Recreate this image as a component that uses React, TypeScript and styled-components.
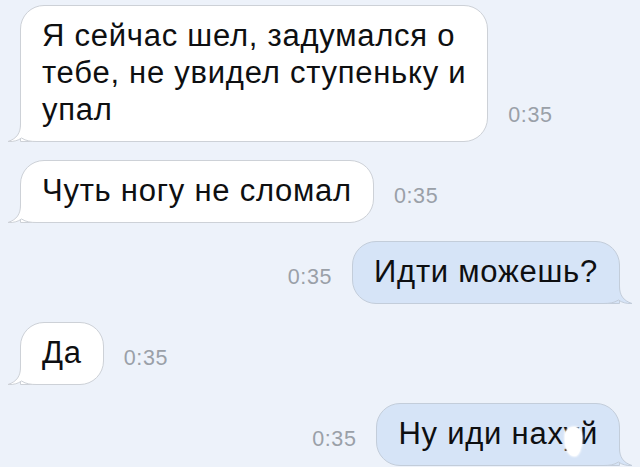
import React from "react";
import styled, { createGlobalStyle } from "styled-components";

const Global = createGlobalStyle`
  html, body { margin: 0; padding: 0; }
  body {
    background: #edf2fa;
    width: 640px;
    height: 467px;
    overflow: hidden;
    font-family: "Liberation Sans", Arial, sans-serif;
  }
`;

const Chat = styled.div`
  display: flex;
  flex-direction: column;
  gap: 18px;
  padding: 5px 20px 0 20px;
`;

const Row = styled.div<{ $out?: boolean }>`
  display: flex;
  align-items: flex-end;
  gap: 20px;
  justify-content: ${(p) => (p.$out ? "flex-end" : "flex-start")};
`;

const Bubble = styled.div<{ $out?: boolean }>`
  position: relative;
  padding: 11px 21px 13px;
  border: 1px solid ${(p) => (p.$out ? "#c3cdda" : "#cdd1d7")};
  background: ${(p) => (p.$out ? "#d6e4f7" : "#ffffff")};
  border-radius: 24px;
  ${(p) =>
    p.$out ? "border-bottom-right-radius: 0;" : "border-bottom-left-radius: 0;"}
  color: #0e0f11;
  font-size: 31px;
  line-height: 37px;
  letter-spacing: 0.75px;
  white-space: nowrap;
`;

const Text = styled.span`
  position: relative;
  z-index: 1;
`;

const TailSvg = styled.svg<{ $out?: boolean }>`
  position: absolute;
  bottom: -1px;
  width: 40px;
  height: 30px;
  z-index: 0;
  ${(p) => (p.$out ? "right: -14px; transform: scaleX(-1);" : "left: -14px;")}
`;

const Time = styled.span`
  font-size: 21.5px;
  line-height: 24px;
  letter-spacing: 0.6px;
  color: #9aa0a8;
  margin-bottom: 15px;
  white-space: nowrap;
`;

const Censored = styled.span`
  position: relative;
  &::after {
    content: "";
    position: absolute;
    left: 1px;
    top: 11px;
    width: 17px;
    height: 29px;
    background: #ffffff;
    border-radius: 55% 50% 45% 55% / 30% 35% 65% 60%;
    box-shadow: 0 0 2px 1px rgba(255, 255, 255, 0.9);
  }
`;

const Tail: React.FC<{ out?: boolean }> = ({ out }) => {
  const fill = out ? "#d6e4f7" : "#ffffff";
  const stroke = out ? "#c3cdda" : "#cdd1d7";
  return (
    <TailSvg $out={out} viewBox="0 0 40 30">
      <path
        d="M13.5,0 L13.5,12 C13.5,21 10,26.5 1,29.5 C7,29.8 11,28.5 14.5,26 C19,29 24,29.5 30,29.5 L40,29.5 L40,0 Z"
        fill={fill}
      />
      <path
        d="M13.5,0 L13.5,12 C13.5,21 10,26.5 1,29.5 C7,29.8 11,28.5 14.5,26 C19,29 24,29.5 30,29.5 L40,29.5"
        fill="none"
        stroke={stroke}
        strokeWidth="1"
      />
    </TailSvg>
  );
};

const Msg: React.FC<{ out?: boolean; time: string; children: React.ReactNode }> = ({
  out,
  time,
  children,
}) => (
  <Row $out={out}>
    {out && <Time>{time}</Time>}
    <Bubble $out={out}>
      <Tail out={out} />
      <Text>{children}</Text>
    </Bubble>
    {!out && <Time>{time}</Time>}
  </Row>
);

export default function App() {
  return (
    <>
      <Global />
      <Chat>
        <Msg time="0:35">
          Я сейчас шел, задумался о
          <br />
          тебе, не увидел ступеньку и
          <br />
          упал
        </Msg>
        <Msg time="0:35">Чуть ногу не сломал</Msg>
        <Msg out time="0:35">
          Идти можешь?
        </Msg>
        <Msg time="0:35">Да</Msg>
        <Msg out time="0:35">
          Ну иди нах<Censored>у</Censored>й
        </Msg>
      </Chat>
    </>
  );
}
